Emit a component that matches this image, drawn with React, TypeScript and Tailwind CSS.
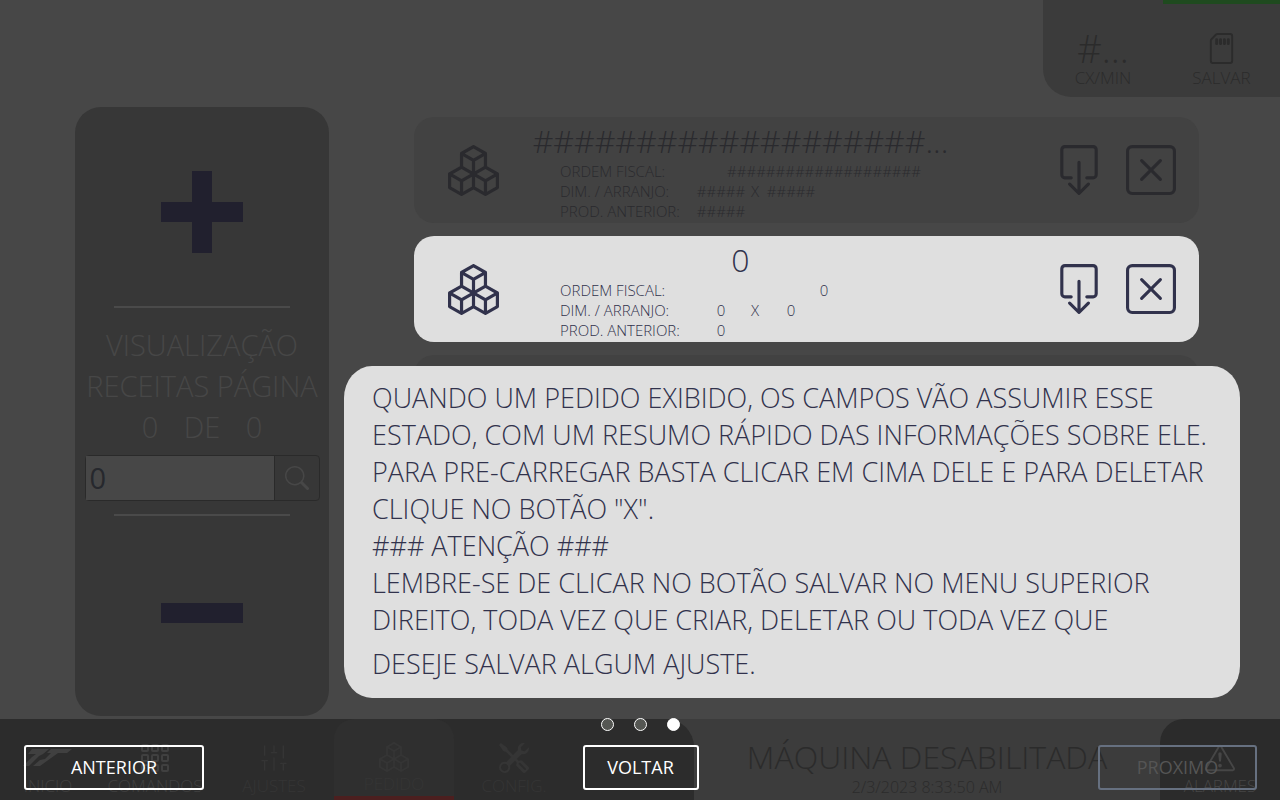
import type { ReactNode } from "react";
import {
  BsBoxArrowDown,
  BsBoxes,
  BsExclamationTriangle,
  BsGrid3X3Gap,
  BsSdCard,
  BsSearch,
  BsTools,
  BsXSquare,
} from "react-icons/bs";
import { SlidersVertical } from "lucide-react";

type Order = {
  title: string;
  fiscal: string;
  width: string;
  height: string;
  previous: string;
};

const maskedOrder: Order = {
  title: "###################...",
  fiscal: "####################",
  width: "#####",
  height: "#####",
  previous: "#####",
};

const emptyOrder: Order = {
  title: "0",
  fiscal: "0",
  width: "0",
  height: "0",
  previous: "0",
};

function OrderCard({ order, active = false }: { order: Order; active?: boolean }) {
  return (
    <article
      className={
        active
          ? "flex h-[106px] items-center rounded-[20px] bg-[#dfdfdf] pr-[23px] pl-[34px] text-[#31324c]"
          : "flex h-[106px] items-center rounded-[20px] bg-[#424242] pr-[23px] pl-[34px] text-[#2a2a2e]"
      }
    >
      <BsBoxes className="size-[51px] shrink-0" aria-hidden="true" />
      <div className="ml-[30px] w-[423px] shrink-0 self-start pt-1">
        <h2 className="text-center text-[32px] leading-10">{order.title}</h2>
        <dl className="ml-[31px] grid grid-cols-[136px_50px_18px_54px_1fr] text-[15px] leading-5">
          <dt>ORDEM FISCAL:</dt>
          <dd className="col-span-4 text-center">{order.fiscal}</dd>
          <dt>DIM. / ARRANJO:</dt>
          <dd className="text-center">{order.width}</dd>
          <dd className="text-center">X</dd>
          <dd className="text-center">{order.height}</dd>
          <dt className="col-start-1">PROD. ANTERIOR:</dt>
          <dd className="text-center">{order.previous}</dd>
        </dl>
      </div>
      <div className="ml-auto flex gap-[22px]">
        <button type="button" aria-label="Carregar">
          <BsBoxArrowDown className="size-[50px]" />
        </button>
        <button type="button" aria-label="Deletar">
          <BsXSquare className="size-[50px]" />
        </button>
      </div>
    </article>
  );
}

function CompanyLogo() {
  return (
    <svg viewBox="0 0 50 20" className="h-5 w-[50px]" fill="currentColor" aria-hidden="true">
      <path d="M9 1h17l-6 5-4 2L6 18H0l9-9 4-3H5z" />
      <path d="M28 1h21l-5 4h-9L17 18h-7l7-6 5-1 6-6h-4z" />
    </svg>
  );
}

function NavItem({
  icon,
  label,
  className,
}: {
  icon: ReactNode;
  label: string;
  className: string;
}) {
  return (
    <a href="#" className={className}>
      <span className="flex h-8 items-center">{icon}</span>
      <span>{label}</span>
    </a>
  );
}

export default function App() {
  return (
    <div className="relative flex min-h-screen flex-col bg-[#474747] font-['Open_Sans',sans-serif] font-light">
      <header className="flex justify-end">
        <div className="flex h-[97px] rounded-bl-[28px] bg-[#3b3b3b] text-[#2b2b2b]">
          <div className="flex w-[120px] flex-col items-center pt-7">
            <span className="text-[38px] leading-10">#...</span>
            <span className="text-[17px] leading-5">CX/MIN</span>
          </div>
          <button
            type="button"
            className="flex w-[117px] flex-col items-center border-t-4 border-[#1f4a1f] pt-[29px]"
          >
            <BsSdCard className="size-[31px]" />
            <span className="mt-1 text-[17px] leading-5">SALVAR</span>
          </button>
        </div>
      </header>

      <main className="flex flex-1 gap-[85px] pt-[10px] pr-[81px] pb-[3px] pl-[75px]">
        <aside className="flex w-[254px] shrink-0 flex-col items-center rounded-[26px] bg-[#373737] text-[#474747]">
          <button type="button" aria-label="Próxima página" className="mt-16 text-[#21202e]">
            <svg viewBox="0 0 82 82" className="size-[82px]" fill="currentColor">
              <path d="M31 0h20v31h31v20H51v31H31V51H0V31h31z" />
            </svg>
          </button>
          <hr className="mt-[53px] w-44 border-t-2 border-[#4a4a4a]" />
          <p className="mt-4 text-center text-[29px] leading-[41px]">
            VISUALIZAÇÃO
            <br />
            RECEITAS PÁGINA
          </p>
          <p className="grid w-[144px] grid-cols-[40px_1fr_40px] text-center text-[29px] leading-[41px]">
            <span>0</span>
            <span>DE</span>
            <span>0</span>
          </p>
          <form className="mt-2 flex h-[46px] w-[235px] rounded-sm border border-[#2a2a2a]">
            <input
              type="text"
              aria-label="Página"
              defaultValue="0"
              className="min-w-0 flex-1 bg-[#474747] px-1 text-[29px] font-normal text-[#26282d]"
            />
            <button
              type="button"
              aria-label="Buscar"
              className="flex w-[45px] items-center justify-center border-l border-[#2a2a2a]"
            >
              <BsSearch className="size-6" />
            </button>
          </form>
          <hr className="mt-[13px] w-44 border-t-2 border-[#4a4a4a]" />
          <button type="button" aria-label="Página anterior" className="mt-[87px] text-[#21202e]">
            <svg viewBox="0 0 82 20" className="h-5 w-[82px]" fill="currentColor">
              <path d="M0 0h82v20H0z" />
            </svg>
          </button>
        </aside>

        <section className="flex min-w-0 flex-1 flex-col gap-[13px] pt-[10px]">
          <OrderCard order={maskedOrder} />
          <OrderCard order={emptyOrder} active />
          <div className="h-[106px] rounded-[20px] bg-[#424242]" />
        </section>
      </main>

      <footer className="flex h-[81px] bg-[#3c3c3c] text-[17px] leading-6">
        <nav className="flex w-[694px] rounded-tr-[28px] bg-[#2c2c2c] text-[#353535]">
          <NavItem
            icon={<CompanyLogo />}
            label="INICIO"
            className="flex w-[96px] flex-col items-center pt-[23px] text-[#404040]"
          />
          <NavItem
            icon={<BsGrid3X3Gap className="size-8" />}
            label="COMANDOS"
            className="flex w-[118px] flex-col items-center pt-[23px] text-[#404040]"
          />
          <NavItem
            icon={<SlidersVertical className="size-8" strokeWidth={1} />}
            label="AJUSTES"
            className="flex w-[120px] flex-col items-center pt-[23px]"
          />
          <NavItem
            icon={<BsBoxes className="size-[30px]" />}
            label="PEDIDO"
            className="flex w-[120px] flex-col items-center rounded-t-[20px] border-b-4 border-[#4c1f1f] bg-[#2f2f2f] pt-[23px]"
          />
          <NavItem
            icon={<BsTools className="size-[30px]" />}
            label="CONFIG."
            className="flex w-[120px] flex-col items-center pt-[23px]"
          />
        </nav>
        <div className="flex flex-1 flex-col items-center pt-[18px] text-[#2b2b2b]">
          <span className="text-[32px] leading-10">MÁQUINA DESABILITADA</span>
          <span className="text-[16px] leading-5">2/3/2023 8:33:50 AM</span>
        </div>
        <NavItem
          icon={<BsExclamationTriangle className="size-[30px]" />}
          label="ALARMES"
          className="flex w-[120px] flex-col items-center rounded-tl-[24px] bg-[#2b2b2b] pt-[23px] text-[#464646]"
        />
      </footer>

      <div
        role="dialog"
        aria-label="Ajuda de pedidos"
        className="absolute inset-0 flex flex-col pt-[366px] pb-[10px]"
      >
        <div className="mr-10 ml-[344px] h-[332px] rounded-[28px/32px] bg-[#dfdfdf] pt-[13px] pr-4 pl-7 text-[27px] leading-[37px] text-[#31324c]">
          <p>
            QUANDO UM PEDIDO EXIBIDO, OS CAMPOS VÃO ASSUMIR ESSE ESTADO, COM UM RESUMO RÁPIDO DAS
            INFORMAÇÕES SOBRE ELE.
          </p>
          <p>
            PARA PRE-CARREGAR BASTA CLICAR EM CIMA DELE E PARA DELETAR CLIQUE NO BOTÃO "X".
          </p>
          <p>### ATENÇÃO ###</p>
          <p>
            LEMBRE-SE DE CLICAR NO BOTÃO SALVAR NO MENU SUPERIOR DIREITO, TODA VEZ QUE CRIAR,
            DELETAR OU TODA VEZ QUE
          </p>
          <p className="mt-[7px]">DESEJE SALVAR ALGUM AJUSTE.</p>
        </div>
        <div className="mt-auto flex justify-center gap-5 pb-[14px]">
          <span className="size-[13px] rounded-full border border-white bg-[#555753]" />
          <span className="size-[13px] rounded-full border border-white bg-[#555753]" />
          <span className="size-[13px] rounded-full border border-white bg-white" />
        </div>
        <div className="grid grid-cols-[1fr_auto_1fr] pr-[23px] pl-6 text-[18px] font-normal text-white">
          <button
            type="button"
            className="h-[45px] w-[180px] justify-self-start rounded-[3px] border-2 border-white"
          >
            ANTERIOR
          </button>
          <button type="button" className="h-[45px] w-[116px] rounded-[3px] border-2 border-white">
            VOLTAR
          </button>
          <button
            type="button"
            disabled
            className="h-[45px] w-[159px] justify-self-end rounded-[3px] border-2 border-[#667080] text-[#555555]"
          >
            PROXIMO
          </button>
        </div>
      </div>
    </div>
  );
}
